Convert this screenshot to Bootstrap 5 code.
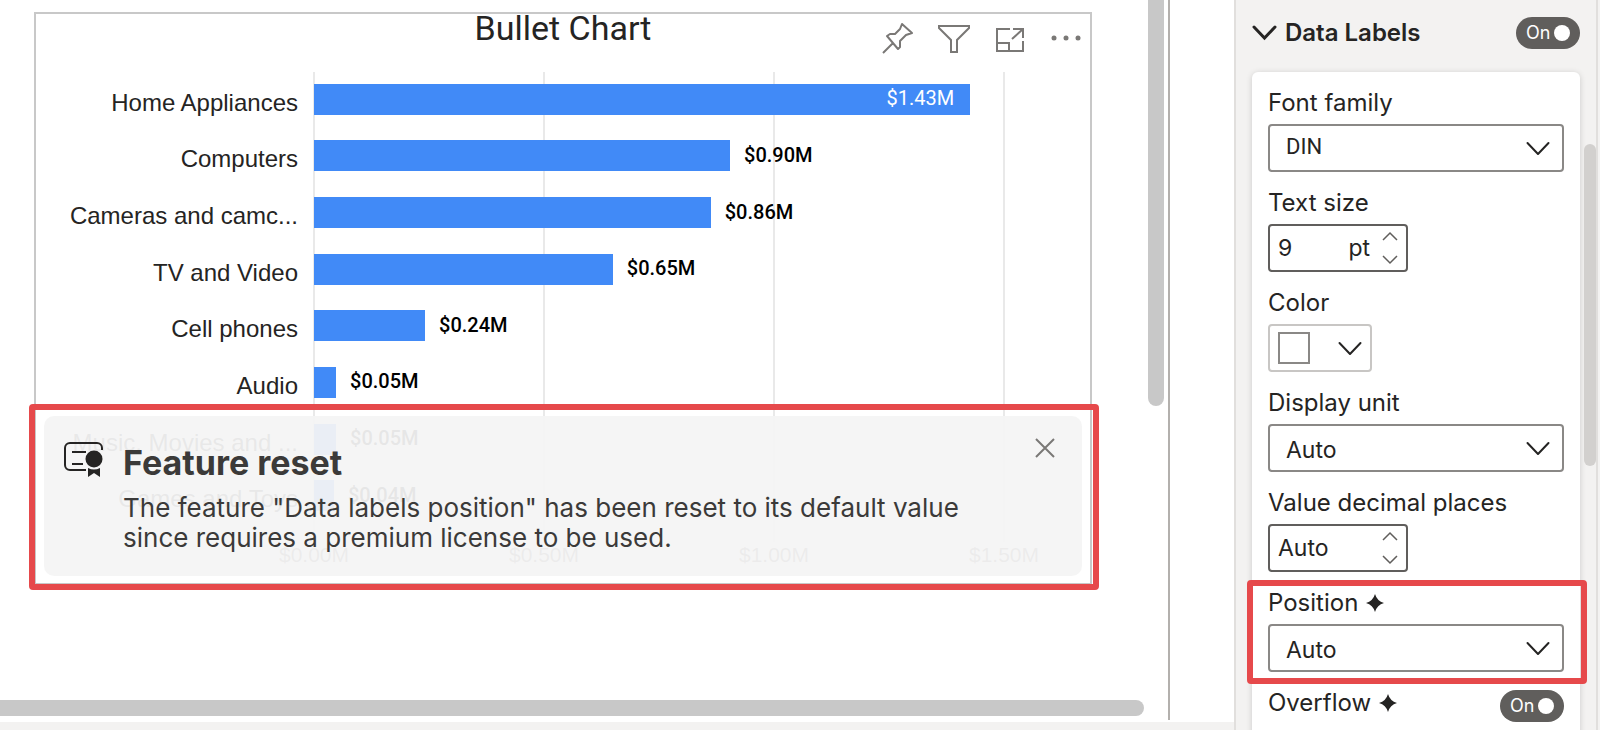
<!DOCTYPE html>
<html lang="en">
<head>
<meta charset="utf-8">
<meta name="viewport" content="width=device-width, initial-scale=1">
<title>Bullet Chart – Data Labels</title>
<link href="https://cdn.jsdelivr.net/npm/bootstrap@5.3.0/dist/css/bootstrap.min.css" rel="stylesheet">
<style>
  :root { --ink: #252423; --accent-red: #e6494b; --bar: #418af7; --pane: #f3f2f1; }
  body { font-family: Inter, "Open Sans", sans-serif; font-size: 24px; line-height: 30px; color: var(--ink); background: #fff; }

  /* report canvas */
  .workspace { margin: 0 64px 2px 0; border-right: 2px solid #b3b0ad; }
  .canvas-area { padding: 12px 56px 0 34px; }
  .scroll-thumb { background: #c8c8c8; border-radius: 8px; }
  .scroll-v { width: 16px; height: 406px; margin-right: 4px; border-radius: 0 0 8px 8px; }
  .scroll-h { height: 16px; margin: 0 24px 4px 0; border-radius: 0 8px 8px 0; }
  .status-strip { height: 8px; background: var(--pane); }

  .visual { border: 2px solid #c8c8c8; height: 573px; }
  .visual-title { font: 400 34px/28px Roboto, sans-serif; height: 57px; }
  .visual-tools { top: 8px; right: 8px; gap: 24px; }
  .visual-tools .btn, .close-btn { --bs-btn-padding-x: 0; --bs-btn-padding-y: 0; --bs-btn-border-width: 0; display: flex; color: #7a7876; }

  .plot { display: grid; grid-template-columns: 278px 1fr; padding-right: 86px; }
  .category-list, .bar-list { grid-row: 1; height: 453px; display: flex; flex-direction: column; }
  .category-list > *, .bar-list > * { flex: 1 1 0; display: flex; align-items: center; }
  .category-list { font: 24px/28px "Liberation Sans", Arial, sans-serif; }
  .category-list > * { justify-content: flex-end; padding: 7px 16px 0 0; }
  .bar-list, .gridlines { grid-column: 2; }
  .bar-list { z-index: 1; font: 500 20px/24px Roboto, sans-serif; color: #000; }
  .bar-fill { height: 31px; background: var(--bar); flex: none; display: flex; align-items: center; justify-content: flex-end; }
  .bar-value { padding: 0 0 2px 14px; }
  .bar-inside { color: #fff; font-weight: 400; padding: 0 16px 2px 0; }
  .gridlines { grid-row: 1; margin: 1px -1px -18px; display: flex; border-right: 2px solid #e9e9e9; }
  .gridlines > * { flex: 1; border-left: 2px solid #e9e9e9; }
  .axis { grid-column: 2; display: flex; justify-content: space-between; margin: 19px -40px 0; font: 21px/24px "Liberation Sans", Arial, sans-serif; color: #605e5c; }
  .axis > * { width: 80px; text-align: center; }

  .marked { border: 6px solid var(--accent-red); border-radius: 4px; }
  .notice-frame { left: -7px; right: -9px; bottom: -7px; z-index: 2; padding: 6px 11px 8px 9px; }
  .notice { min-height: 160px; border-radius: 10px; background: rgba(244,244,244,.94); padding: 21px 26px 0 20px; color: #3b3a39; }
  .notice-icon { margin-top: 5px; }
  .notice-text { margin: 6px 0 0 20px; font-size: 26px; line-height: 30px; }
  .notice-title { font-size: 34px; line-height: 40px; font-weight: 700; margin: 0 0 10px; }

  /* format pane */
  .format-pane { width: 366px; background: var(--pane); border-left: 2px solid #e1dfdd; }
  .pane-body { padding: 0 16px; width: 360px; }
  .pane-head { height: 72px; padding-bottom: 6px; }
  .pane-head h2 { font-size: 24px; line-height: 30px; font-weight: 600; }
  .pane-card { background: #fff; border-radius: 6px 6px 0 0; box-shadow: 0 1px 6px rgba(0,0,0,.16); padding: 0 16px 40px; }
  .field-label { height: 52px; padding: 16px 0 6px; }
  .control { height: 48px; border: 2px solid #8a8886; border-radius: 4px; background-color: #fff; color: var(--ink); font-size: 23px; }
  .form-select.control { padding: 4px 48px 0 16px; line-height: 30px; background-position: right 11px center; background-size: 26px 26px;
    background-image: url("data:image/svg+xml,%3Csvg xmlns='http://www.w3.org/2000/svg' viewBox='0 0 26 26' fill='none' stroke='%23252423' stroke-width='2' stroke-linecap='round' stroke-linejoin='round'%3E%3Cpath d='M2.500 8l10.500 11 10.500-11'/%3E%3C/svg%3E"); }
  .form-select.font-din { font-family: Roboto, sans-serif; font-size: 22px; padding: 0 48px 2px 16px; }
  .stepper { width: 140px; border-color: #605e5c; padding: 0 8px; }
  .stepper input { border: 0; outline: 0; padding: 0; min-width: 0; flex: 1; color: inherit; background: none; }
  .stepper .btn { --bs-btn-padding-x: 0; --bs-btn-padding-y: 0; --bs-btn-border-width: 0; display: flex; color: #605e5c; }
  .stepper-arrows { gap: 14px; margin-left: 12px; }
  .color-picker { width: 104px; border-color: #c8c6c4; padding: 0 7px 0 8px; }
  .swatch { width: 32px; height: 32px; border: 2px solid #8a8886; }
  .pane-switch { width: 64px; height: 32px; border-radius: 16px; background: #605e5c; color: #fff; font-size: 18px; line-height: 32px; padding: 0 10px; }
  .pane-switch input { appearance: none; width: 16px; height: 16px; border-radius: 50%; background: #fff; margin: 0; }
  .field-switch { margin-top: 18px; }
  .position-field .marked { left: -21px; right: -23px; top: 8px; bottom: -12px; pointer-events: none; }
  .pane-scroll { width: 12px; height: 322px; right: 4px; top: 144px; border-radius: 6px; background: #d2d0ce; }
  .pane-edge { width: 2px; background: #e1dfdd; right: 2px; }
</style>
</head>
<body>
<div class="d-flex vh-100 overflow-hidden">
  <main class="flex-grow-1 d-flex flex-column overflow-hidden">
    <div class="workspace flex-grow-1 d-flex flex-column">
      <div class="d-flex flex-grow-1">
        <div class="canvas-area flex-grow-1">
          <section class="visual position-relative" aria-label="Bullet Chart">
            <h1 class="visual-title text-center m-0">Bullet Chart</h1>
            <div class="visual-tools position-absolute d-flex">
              <button class="btn" type="button" aria-label="Pin"><svg width="32" height="32" fill="none" stroke="currentColor" stroke-width="2" stroke-linejoin="round"><path d="M1 31 11 21M20 2l10 9-6 2-6 6v6l-2 2L5 14l3-2h5l5-5z"/></svg></button>
              <button class="btn" type="button" aria-label="Filter"><svg width="32" height="32" fill="none" stroke="currentColor" stroke-width="2"><path d="M1 4h30v2L19 18v12h-6V18L1 6z"/></svg></button>
              <button class="btn" type="button" aria-label="Focus mode"><svg width="32" height="32" fill="none" stroke="currentColor" stroke-width="2"><path d="M16 7H3v22h26V19M3 21h12v8M18 17 29 7M19 7h10v9"/></svg></button>
              <button class="btn" type="button" aria-label="More options"><svg width="32" height="32" fill="currentColor"><circle cx="4" cy="16" r="2.500"/><circle cx="16" cy="16" r="2.500"/><circle cx="28" cy="16" r="2.500"/></svg></button>
            </div>
            <div class="plot">
              <div class="category-list">
                <div>Home Appliances</div><div>Computers</div><div>Cameras and camc...</div><div>TV and Video</div>
                <div>Cell phones</div><div>Audio</div><div>Music, Movies and ...</div><div>Games and Toys</div>
              </div>
              <div class="gridlines"><div></div><div></div><div></div></div>
              <div class="bar-list">
                <div><div class="bar-fill bar-inside" style="width:95.1%">$1.43M</div></div>
                <div><div class="bar-fill" style="width:60.3%"></div><span class="bar-value">$0.90M</span></div>
                <div><div class="bar-fill" style="width:57.5%"></div><span class="bar-value">$0.86M</span></div>
                <div><div class="bar-fill" style="width:43.3%"></div><span class="bar-value">$0.65M</span></div>
                <div><div class="bar-fill" style="width:16.1%"></div><span class="bar-value">$0.24M</span></div>
                <div><div class="bar-fill" style="width:3.2%"></div><span class="bar-value">$0.05M</span></div>
                <div><div class="bar-fill" style="width:3.2%"></div><span class="bar-value">$0.05M</span></div>
                <div><div class="bar-fill" style="width:2.9%"></div><span class="bar-value">$0.04M</span></div>
              </div>
              <div class="axis"><span>$0.00M</span><span>$0.50M</span><span>$1.00M</span><span>$1.50M</span></div>
            </div>
            <div class="notice-frame marked position-absolute">
              <div class="notice d-flex align-items-start" role="alert">
                <svg class="notice-icon flex-shrink-0" width="39" height="36" viewBox="0 0 39 36" fill="none" stroke="#252423" stroke-width="2"><path d="M22 28H6a5 5 0 0 1-5-5V6a5 5 0 0 1 5-5h27a5 5 0 0 1 5 5v2M8 10h14M8 22h11"/><circle cx="30" cy="17" r="8.500" fill="#252423" stroke="none"/><path d="M24 26q6 3 12 0v9l-6-4-6 4z" fill="#252423" stroke="none"/></svg>
                <div class="notice-text flex-grow-1">
                  <h2 class="notice-title">Feature reset</h2>
                  <p class="m-0">The feature "Data labels position" has been reset to its default value<br>since requires a premium license to be used.</p>
                </div>
                <button class="btn close-btn" type="button" aria-label="Close"><svg width="22" height="22" fill="none" stroke="currentColor" stroke-width="2"><path d="m2 2 18 18M20 2 2 20"/></svg></button>
              </div>
            </div>
          </section>
        </div>
        <div class="scroll-thumb scroll-v"></div>
      </div>
      <div class="scroll-thumb scroll-h"></div>
    </div>
    <div class="status-strip"></div>
  </main>

  <aside class="format-pane flex-shrink-0 position-relative overflow-hidden">
    <div class="pane-body">
      <div class="pane-head d-flex align-items-center">
        <svg width="25" height="16" fill="none" stroke="#252423" stroke-width="3" stroke-linecap="round"><path d="m2 2 10.500 11L23 2"/></svg>
        <h2 class="m-0 ms-2 flex-grow-1">Data Labels</h2>
        <label class="pane-switch d-flex align-items-center justify-content-between">On<input type="checkbox" role="switch" checked aria-label="Data labels"></label>
      </div>
      <form class="pane-card">
        <div>
          <label class="field-label d-block" for="font">Font family</label>
          <select class="form-select control font-din" id="font"><option>DIN</option></select>
        </div>
        <div>
          <label class="field-label d-block" for="size">Text size</label>
          <div class="control stepper d-flex align-items-center">
            <input id="size" type="text" value="9"><span>pt</span>
            <div class="stepper-arrows d-flex flex-column">
              <button class="btn" type="button" aria-label="Increase"><svg width="16" height="10" fill="none" stroke="currentColor" stroke-width="1.500"><path d="m1 9 7-7 7 7"/></svg></button>
              <button class="btn" type="button" aria-label="Decrease"><svg width="16" height="10" fill="none" stroke="currentColor" stroke-width="1.500"><path d="m1 1 7 7 7-7"/></svg></button>
            </div>
          </div>
        </div>
        <div>
          <label class="field-label d-block" for="color">Color</label>
          <button class="control color-picker d-flex align-items-center justify-content-between" id="color" type="button">
            <span class="swatch"></span>
            <svg width="26" height="26" viewBox="0 0 26 26" fill="none" stroke="#252423" stroke-width="2" stroke-linecap="round" stroke-linejoin="round"><path d="M2.500 8l10.500 11 10.500-11"/></svg>
          </button>
        </div>
        <div>
          <label class="field-label d-block" for="unit">Display unit</label>
          <select class="form-select control" id="unit"><option>Auto</option></select>
        </div>
        <div>
          <label class="field-label d-block" for="places">Value decimal places</label>
          <div class="control stepper d-flex align-items-center">
            <input id="places" type="text" value="Auto">
            <div class="stepper-arrows d-flex flex-column">
              <button class="btn" type="button" aria-label="Increase"><svg width="16" height="10" fill="none" stroke="currentColor" stroke-width="1.500"><path d="m1 9 7-7 7 7"/></svg></button>
              <button class="btn" type="button" aria-label="Decrease"><svg width="16" height="10" fill="none" stroke="currentColor" stroke-width="1.500"><path d="m1 1 7 7 7-7"/></svg></button>
            </div>
          </div>
        </div>
        <div class="position-field position-relative">
          <label class="field-label d-flex align-items-center gap-2" for="position">Position
            <svg width="18" height="18" fill="#252423"><path d="M9 0q2 7 9 9-7 2-9 9-2-7-9-9 7-2 9-9z"/></svg></label>
          <select class="form-select control" id="position"><option>Auto</option></select>
          <div class="marked position-absolute"></div>
        </div>
        <div class="d-flex justify-content-between">
          <label class="field-label d-flex align-items-center gap-2" for="overflow">Overflow
            <svg width="18" height="18" fill="#252423"><path d="M9 0q2 7 9 9-7 2-9 9-2-7-9-9 7-2 9-9z"/></svg></label>
          <label class="pane-switch field-switch d-flex align-items-center justify-content-between">On<input id="overflow" type="checkbox" role="switch" checked></label>
        </div>
      </form>
    </div>
    <div class="pane-scroll position-absolute"></div>
    <div class="pane-edge position-absolute top-0 bottom-0"></div>
  </aside>
</div>
<script src="https://cdn.jsdelivr.net/npm/bootstrap@5.3.0/dist/js/bootstrap.bundle.min.js"></script>
</body>
</html>
